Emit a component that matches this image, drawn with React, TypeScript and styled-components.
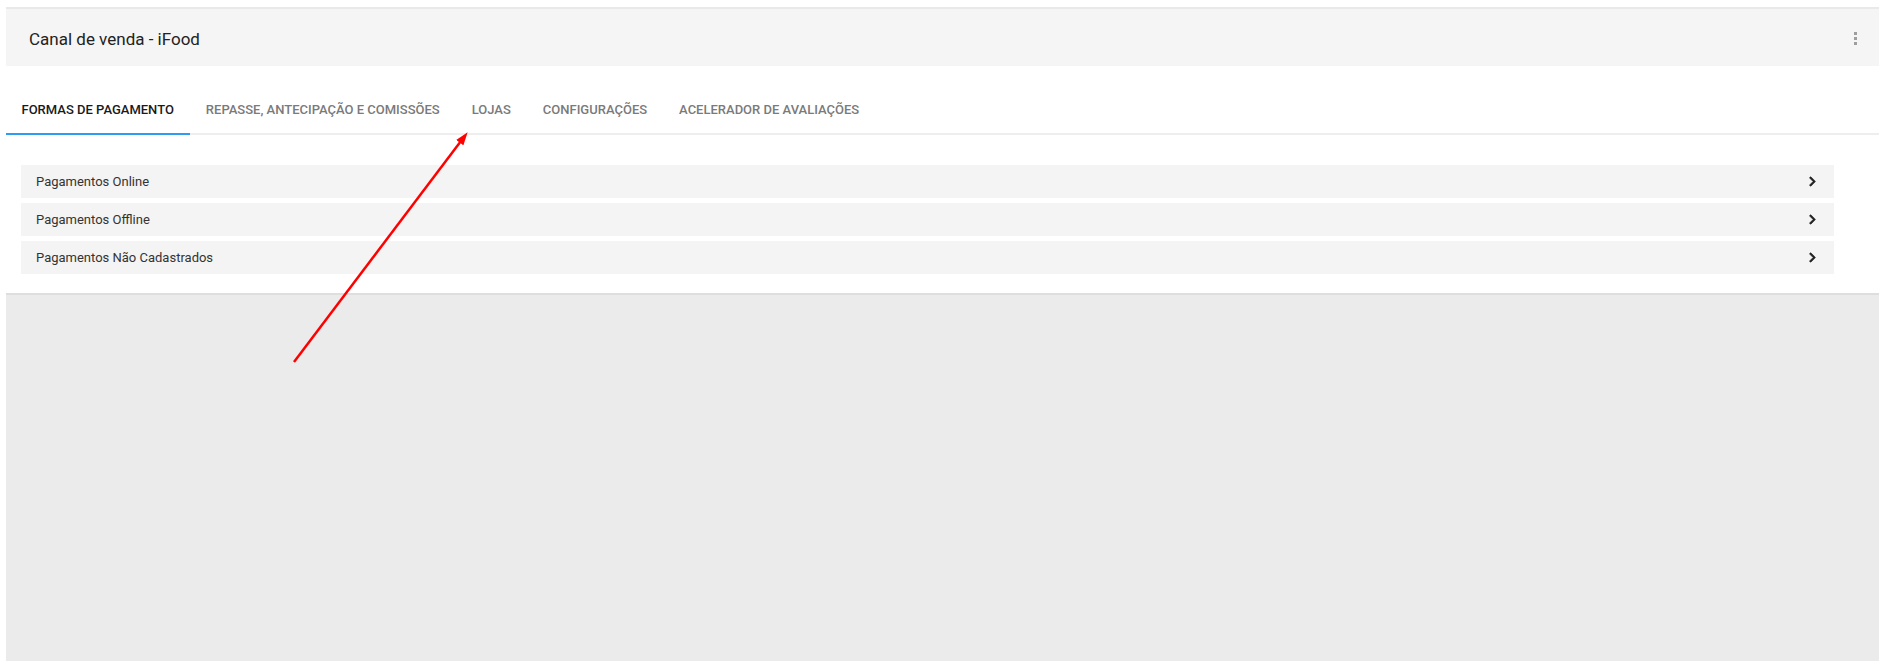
import React, { FC, useState } from 'react';
import styled, { createGlobalStyle } from 'styled-components';
import { FaChevronRight } from 'react-icons/fa';

const GlobalStyle = createGlobalStyle`
  html, body {
    margin: 0;
    padding: 0;
    background: #fff;
    font-family: Roboto, 'Liberation Sans', Arial, sans-serif;
  }
`;

const tabs = [
  'Formas de pagamento',
  'Repasse, antecipação e comissões',
  'Lojas',
  'Configurações',
  'Acelerador de avaliações',
];

const payments = [
  'Pagamentos Online',
  'Pagamentos Offline',
  'Pagamentos Não Cadastrados',
];

const App: FC = () => {
  const [active, setActive] = useState(0);

  return (
    <Page>
      <GlobalStyle />
      <Card>
        <Header>
          <Title>Canal de venda - iFood</Title>
          <MenuButton aria-label="menu">
            <Dot />
            <Dot />
            <Dot />
          </MenuButton>
        </Header>
        <TabBar>
          {tabs.map((t, i) => (
            <Tab key={t} $active={i === active} onClick={() => setActive(i)}>
              {t}
            </Tab>
          ))}
        </TabBar>
        <List>
          {payments.map((p) => (
            <Row key={p}>
              <RowLabel>{p}</RowLabel>
              <Chevron size={11} color="#222" />
            </Row>
          ))}
        </List>
        <Footer />
      </Card>
      {/* annotation arrow drawn over the screenshot */}
      <Arrow width="1885" height="665" viewBox="0 0 1885 665">
        <defs>
          <marker
            id="head"
            markerWidth="13"
            markerHeight="9"
            refX="2"
            refY="4.5"
            orient="auto"
            markerUnits="userSpaceOnUse"
          >
            <path d="M0,0 L13,4.5 L0,9 z" fill="#ff0000" />
          </marker>
        </defs>
        <line
          x1="294"
          y1="362"
          x2="461"
          y2="141"
          stroke="#ff0000"
          strokeWidth="2.5"
          markerEnd="url(#head)"
        />
      </Arrow>
    </Page>
  );
};

export default App;

const Page = styled.div`
  position: relative;
  width: 1885px;
  height: 665px;
  padding: 7px 6px 6px 6px;
  box-sizing: border-box;
`;

const Card = styled.div`
  display: flex;
  flex-direction: column;
  height: 100%;
  border-top: 2px solid #e9e9e9;
  background: #fff;
`;

const Header = styled.div`
  display: flex;
  align-items: center;
  justify-content: space-between;
  height: 57px;
  padding: 2px 18px 0 23px;
  box-sizing: border-box;
  background: #f5f5f5;
`;

const Title = styled.h2`
  margin: 0;
  font-size: 17px;
  font-weight: 400;
  color: #222;
`;

const MenuButton = styled.button`
  display: flex;
  flex-direction: column;
  gap: 2px;
  padding: 4px;
  border: 0;
  background: transparent;
  cursor: pointer;
`;

const Dot = styled.span`
  width: 3px;
  height: 3px;
  background: #9e9e9e;
`;

const TabBar = styled.div`
  display: flex;
  margin-top: 20px;
  height: 47px;
  border-bottom: 2px solid #eeeeee;
`;

const Tab = styled.div<{ $active: boolean }>`
  display: flex;
  align-items: center;
  padding: 0 16.5px 0 15.5px;
  margin-bottom: -2px;
  font-size: 13px;
  font-weight: 500;
  text-transform: uppercase;
  color: ${(p) => (p.$active ? '#1a1a1a' : '#7a7a7a')};
  border-bottom: 2px solid ${(p) => (p.$active ? '#2f9cf4' : 'transparent')};
  cursor: pointer;
  white-space: nowrap;
`;

const List = styled.div`
  display: flex;
  flex-direction: column;
  gap: 5px;
  padding: 30px 45px 19px 15px;
`;

const Row = styled.div`
  display: flex;
  align-items: center;
  justify-content: space-between;
  height: 33px;
  padding: 0 16px 0 15px;
  background: #f4f4f4;
  cursor: pointer;
`;

const RowLabel = styled.span`
  font-size: 13px;
  color: #333;
`;

const Chevron = styled(FaChevronRight)`
  stroke: #222;
  stroke-width: 30px;
`;

const Footer = styled.div`
  flex: 1;
  background: #ebebeb;
  border-top: 2px solid #dedede;
`;

const Arrow = styled.svg`
  position: absolute;
  left: 0;
  top: 0;
  pointer-events: none;
`;
